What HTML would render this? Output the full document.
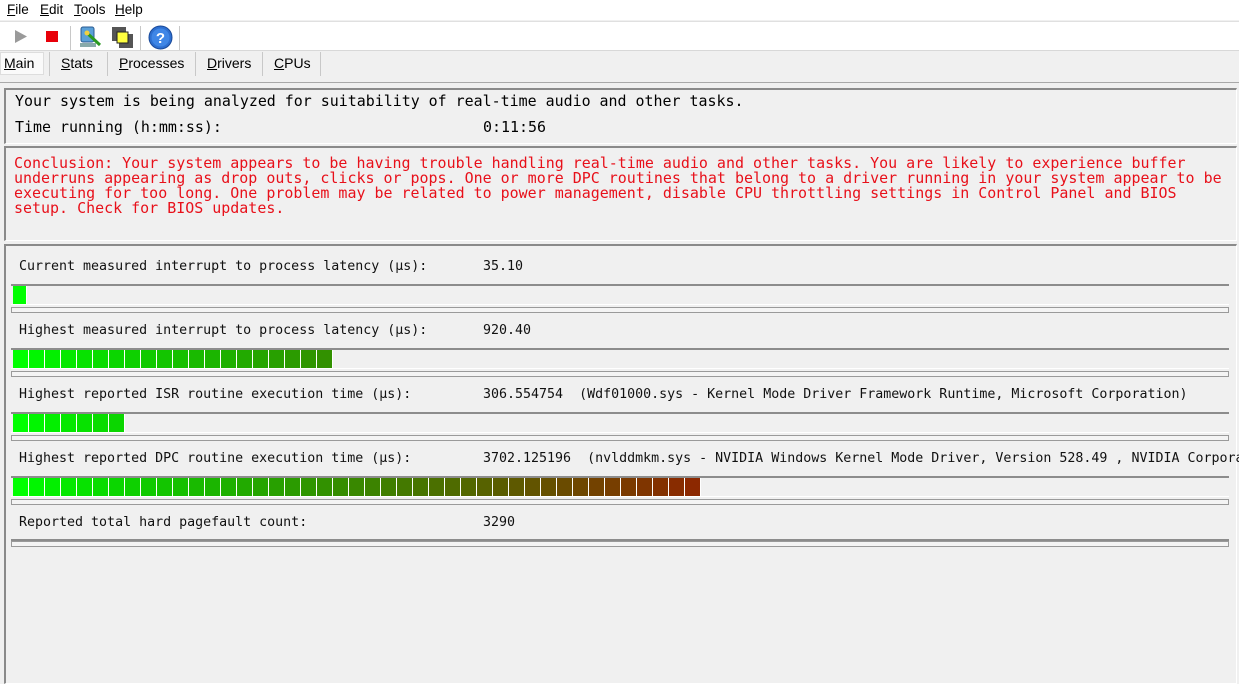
<!DOCTYPE html>
<html><head><meta charset="utf-8"><style>
*{margin:0;padding:0;box-sizing:border-box}
body{width:1239px;height:682px;overflow:hidden;background:#f0f0f0;position:relative;font-family:"Liberation Sans",sans-serif}
.a{position:absolute}
.menu{top:0;left:0;width:1239px;height:20px;background:#fff;font-size:13.5px}
.menu span{position:absolute;top:2px}
.tb{top:21px;left:0;width:1239px;height:30px;background:#fff;border-top:1px solid #e0e0e0;border-bottom:1px solid #d8d8d8}
.sep{position:absolute;top:4px;width:1px;height:24px;background:#c8c8c8}
.tabs span{position:absolute;top:55px;font-size:14px}
.tsep{position:absolute;top:52px;width:1px;height:24px;background:#c8c8c8}
.panel{left:4px;width:1233px;border-top:2px solid #8a8a8a;border-left:2px solid #8a8a8a;border-bottom:1px solid #fff;border-right:1px solid #fff;background:#f0f0f0}
.m{font-family:"DejaVu Sans Mono","Liberation Mono",monospace;white-space:pre;position:absolute}
.t1{font-size:14.95px;color:#000}
.red{font-size:14.97px;color:#e8101a;line-height:15px}
.lb{font-size:13.3px;color:#111}
.track{left:11px;width:1218px;height:21px;border-top:2px solid #8c8c8c;border-bottom:1px solid #fff;display:flex;padding-left:2px}
.track i{display:block;width:16px;height:18px;border-right:1px solid #fff}
.rect{left:11px;width:1218px;height:6px;border:1px solid #9a9a9a;background:#f4f4f4}
</style></head><body>
<div class="a menu"><span style="left:7px"><u>F</u>ile</span><span style="left:40px"><u>E</u>dit</span><span style="left:74px"><u>T</u>ools</span><span style="left:115px"><u>H</u>elp</span></div>
<div class="a tb">
<svg class="a" style="left:14px;top:7px" width="14" height="15"><polygon points="1,1 13,7.5 1,14" fill="#9a9a9a"/></svg>
<div class="a" style="left:46px;top:9px;width:12px;height:11px;background:#e8000a"></div>
<div class="sep" style="left:70px"></div>
<svg class="a" style="left:78px;top:3px" width="24" height="24"><rect x="3" y="2" width="13" height="15" rx="2" fill="#5aa0d8" stroke="#2a5a90"/><rect x="2" y="18" width="16" height="4" fill="#8aa"/><path d="M9 8 L22 20" stroke="#2a9a20" stroke-width="3"/><circle cx="9" cy="8" r="2.5" fill="#f0d040"/></svg>
<svg class="a" style="left:111px;top:4px" width="24" height="24"><rect x="1" y="1" width="14" height="14" fill="#555" /><rect x="8" y="8" width="14" height="14" fill="#555"/><rect x="6" y="6" width="11" height="11" fill="#ffff40" stroke="#222"/></svg>
<div class="sep" style="left:140px"></div>
<svg class="a" style="left:148px;top:3px" width="25" height="25"><circle cx="12.5" cy="12.5" r="11.5" fill="#2d6fd0" stroke="#1a4a9a"/><circle cx="12.5" cy="12.5" r="9" fill="#3f86e6"/><text x="12.5" y="18" font-size="15" font-weight="bold" fill="#fff" text-anchor="middle" font-family="Liberation Sans">?</text></svg>
<div class="sep" style="left:179px"></div>
</div>
<div class="a" style="top:52px;left:0;width:44px;height:23px;background:#fafafa;border:1px solid #ddd"></div>
<div class="tabs"><span style="left:4px"><u>M</u>ain</span><span style="left:61px"><u>S</u>tats</span><span style="left:119px"><u>P</u>rocesses</span><span style="left:207px"><u>D</u>rivers</span><span style="left:274px"><u>C</u>PUs</span></div>
<div class="tsep" style="left:49px"></div><div class="tsep" style="left:107px"></div><div class="tsep" style="left:195px"></div><div class="tsep" style="left:262px"></div><div class="tsep" style="left:320px"></div>
<div class="a" style="top:82px;left:0;width:1239px;height:1px;background:#a8a8a8"></div>
<div class="a panel" style="top:88px;height:56px"></div>
<div class="m t1" style="left:15px;top:92px">Your system is being analyzed for suitability of real-time audio and other tasks.</div>
<div class="m t1" style="left:15px;top:118px">Time running (h:mm:ss):</div>
<div class="m t1" style="left:483px;top:118px">0:11:56</div>
<div class="a panel" style="top:146px;height:95px"></div>
<div class="m red" style="left:14px;top:156px">Conclusion: Your system appears to be having trouble handling real-time audio and other tasks. You are likely to experience buffer
underruns appearing as drop outs, clicks or pops. One or more DPC routines that belong to a driver running in your system appear to be
executing for too long. One problem may be related to power management, disable CPU throttling settings in Control Panel and BIOS
setup. Check for BIOS updates.</div>
<div class="a panel" style="top:244px;height:440px"></div>
<div class="m lb" style="left:19px;top:259px">Current measured interrupt to process latency (µs):</div><div class="m lb" style="left:483px;top:259px">35.10</div>
<div class="m lb" style="left:19px;top:323px">Highest measured interrupt to process latency (µs):</div><div class="m lb" style="left:483px;top:323px">920.40</div>
<div class="m lb" style="left:19px;top:387px">Highest reported ISR routine execution time (µs):</div><div class="m lb" style="left:483px;top:387px">306.554754  (Wdf01000.sys - Kernel Mode Driver Framework Runtime, Microsoft Corporation)</div>
<div class="m lb" style="left:19px;top:451px">Highest reported DPC routine execution time (µs):</div><div class="m lb" style="left:483px;top:451px">3702.125196  (nvlddmkm.sys - NVIDIA Windows Kernel Mode Driver, Version 528.49 , NVIDIA Corporation)</div>
<div class="m lb" style="left:19px;top:515px">Reported total hard pagefault count:</div><div class="m lb" style="left:483px;top:515px">3290</div>
<div class="a track" style="top:284px" id="b1"></div><div class="a rect" style="top:307px"></div>
<div class="a track" style="top:348px" id="b2"></div><div class="a rect" style="top:371px"></div>
<div class="a track" style="top:412px" id="b3"></div><div class="a rect" style="top:435px"></div>
<div class="a track" style="top:476px" id="b4"></div><div class="a rect" style="top:499px"></div>
<div class="a" style="top:539px;left:11px;width:1218px;height:2px;background:#8c8c8c"></div><div class="a rect" style="top:541px"></div>
<script>
function col(i){var t=i/42;var r=Math.round(140*Math.pow(t,1.3)),g=Math.round(255-215*Math.pow(t,0.85));return 'rgb('+r+','+g+',0)';}
[[1,'b1'],[20,'b2'],[7,'b3'],[43,'b4']].forEach(function(p){var e=document.getElementById(p[1]),h='';for(var i=0;i<p[0];i++)h+='<i style="background:'+col(i)+'"></i>';e.innerHTML=h;});
document.querySelector('#b1 i').style.width='14px';
</script>
</body></html>
